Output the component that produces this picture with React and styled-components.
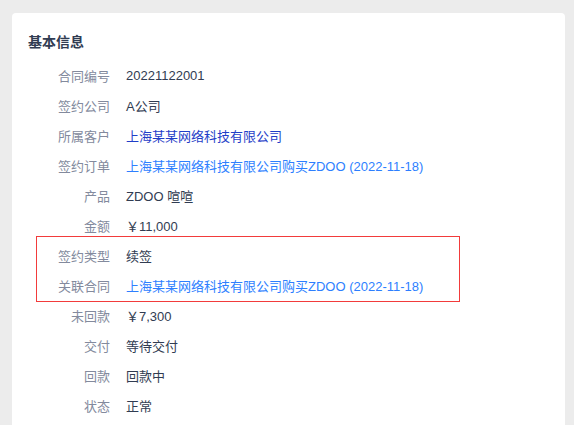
import React from "react";
import styled, { createGlobalStyle } from "styled-components";

const GlobalStyle = createGlobalStyle`
  html, body {
    margin: 0;
    padding: 0;
    background: #ececec;
    overflow: hidden;
  }
  body {
    padding: 13px 9px 0 12px;
    font-family: "Liberation Sans", "Noto Sans CJK SC", sans-serif;
  }
`;

const Card = styled.div`
  background: #fff;
  border-radius: 4px 4px 0 0;
  padding: 19px 16px 5px;
`;

const Title = styled.div`
  font-size: 14px;
  font-weight: bold;
  line-height: 20px;
  color: #313c52;
  margin-bottom: 8px;
`;

const Row = styled.div`
  display: flex;
  align-items: center;
  height: 30px;
  font-size: 13px;
`;

const Label = styled.div`
  width: 82px;
  text-align: right;
  color: #838a9d;
  flex-shrink: 0;
`;

const Value = styled.div`
  margin-left: 16px;
  color: #313c52;
`;

const Link = styled.a`
  margin-left: 16px;
  color: ${(p) => (p.$visited ? "#1f3ec8" : "#2e7fff")};
  text-decoration: none;
  cursor: pointer;
`;

// red annotation frame drawn over the two marked rows
const Highlight = styled.div`
  position: relative;
  &::after {
    content: "";
    position: absolute;
    top: -4px;
    bottom: -2px;
    left: 8px;
    width: 424px;
    border: 1px solid #f23b3b;
    box-sizing: border-box;
    pointer-events: none;
  }
`;

const rowsTop = [
  { label: "合同编号", value: "20221122001" },
  { label: "签约公司", value: "A公司" },
  { label: "所属客户", link: "上海某某网络科技有限公司", visited: true },
  { label: "签约订单", link: "上海某某网络科技有限公司购买ZDOO (2022-11-18)" },
  { label: "产品", value: "ZDOO 喧喧" },
  { label: "金额", value: "￥11,000" },
];

const rowsMarked = [
  { label: "签约类型", value: "续签" },
  { label: "关联合同", link: "上海某某网络科技有限公司购买ZDOO (2022-11-18)" },
];

const rowsBottom = [
  { label: "未回款", value: "￥7,300" },
  { label: "交付", value: "等待交付" },
  { label: "回款", value: "回款中" },
  { label: "状态", value: "正常" },
];

const InfoRow = ({ item }) => (
  <Row>
    <Label>{item.label}</Label>
    {item.link ? (
      <Link $visited={item.visited}>{item.link}</Link>
    ) : (
      <Value>{item.value}</Value>
    )}
  </Row>
);

const App = () => (
  <>
    <GlobalStyle />
    <Card>
      <Title>基本信息</Title>
      {rowsTop.map((item) => (
        <InfoRow key={item.label} item={item} />
      ))}
      <Highlight>
        {rowsMarked.map((item) => (
          <InfoRow key={item.label} item={item} />
        ))}
      </Highlight>
      {rowsBottom.map((item) => (
        <InfoRow key={item.label} item={item} />
      ))}
    </Card>
  </>
);

export default App;
